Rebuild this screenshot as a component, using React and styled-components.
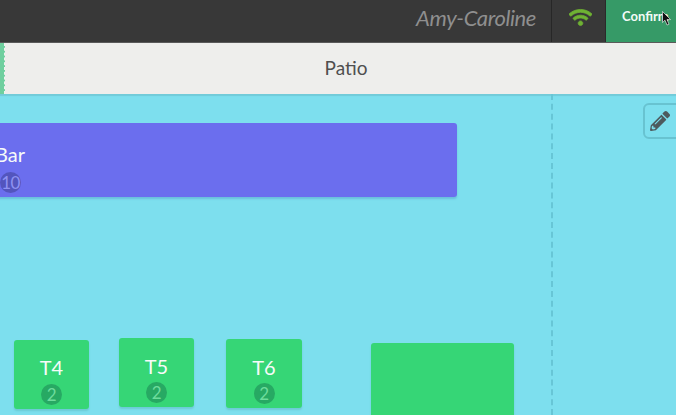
import React from "react";
import styled, { createGlobalStyle } from "styled-components";
import { FaPencilAlt, FaWifi } from "react-icons/fa";

const Global = createGlobalStyle`
  html, body { margin: 0; padding: 0; width: 676px; height: 415px; overflow: hidden; background: #7ddfee; }
  * { box-sizing: border-box; }
  body { font-family: Lato, "Open Sans", sans-serif; }
`;

const Page = styled.div`
  position: relative;
  width: 676px;
  height: 415px;
  overflow: hidden;
  display: flex;
  flex-direction: column;
`;

const TopBar = styled.header`
  flex: none;
  height: 43px;
  display: flex;
  justify-content: flex-end;
  background: #383838;
  border-bottom: 1px solid #5a5a5a;
`;

const UserName = styled.div`
  display: flex;
  align-items: center;
  padding-right: 15px;
  padding-bottom: 8px;
  font-size: 22px;
  font-style: italic;
  letter-spacing: -0.4px;
  color: #8f8f8f;
`;

const StatusCell = styled.div`
  width: 54px;
  display: flex;
  align-items: center;
  justify-content: center;
  padding: 0 0 7px 4px;
  border-left: 1px solid #272727;
  color: #6fb233;
  font-size: 23px;

  svg {
    stroke: currentColor;
    stroke-width: 22px;
  }
`;

const ConfirmButton = styled.button`
  position: relative;
  width: 71px;
  padding: 0 0 10px 16px;
  border: 0;
  border-left: 1px solid #2a2a2a;
  background: #369a67;
  color: #f4fbf7;
  font: 700 13px Lato, sans-serif;
  text-align: left;
  white-space: nowrap;
  overflow: hidden;
`;

const Cursor = styled.svg`
  position: absolute;
  left: 56px;
  top: 11px;
  width: 10px;
  height: 15px;
`;

const TabBar = styled.nav`
  flex: none;
  height: 51px;
  display: flex;
  background: #eeeeec;
`;

const TabMarker = styled.div`
  flex: none;
  width: 5px;
  background: #6fcf9f;
  border-right: 1px dashed #f2f2f0;
`;

const Tab = styled.div`
  flex: 1;
  padding: 0 0 3px 11px;
  display: flex;
  align-items: center;
  justify-content: center;
  font-size: 19px;
  color: #4f4f4f;
`;

const Canvas = styled.main`
  position: relative;
  flex: 1;
  background: #7ddfee;
  box-shadow: inset 0 3px 1px -1px #72cbd9;
`;

const Divider = styled.div`
  position: absolute;
  left: 551px;
  top: 0;
  bottom: 0;
  border-left: 2px dashed #67c6d6;
`;

const EditButton = styled.button`
  position: absolute;
  left: 643px;
  top: 9px;
  width: 50px;
  height: 36px;
  padding: 0 0 0 5px;
  display: flex;
  align-items: center;
  background: transparent;
  border: 2px solid #68c3d1;
  border-radius: 6px;
  color: #4d5a5e;
  font-size: 20px;
`;

const Table = styled.div`
  position: absolute;
  left: ${(p) => p.$x}px;
  top: ${(p) => p.$y}px;
  width: ${(p) => p.$w}px;
  height: ${(p) => p.$h}px;
  padding-top: ${(p) => p.$pad}px;
  display: flex;
  flex-direction: column;
  align-items: center;
  gap: ${(p) => p.$gap}px;
  color: #f6fbf9;
  font-size: 20px;
  line-height: 26px;
  border-radius: 3px;
  background: ${(p) => (p.$bar ? "#6b6eee" : "#36d676")};
  box-shadow: 0 2px 2px ${(p) => (p.$bar ? "#6bbfdc" : "#6ccbd4")};
`;

const BarTable = styled(Table)`
  align-items: flex-start;
`;

const Seats = styled.span`
  width: 21px;
  height: 21px;
  flex: none;
  margin-left: ${(p) => (p.$bar ? "5px" : "0")};
  display: flex;
  align-items: center;
  justify-content: center;
  border-radius: 50%;
  font-size: 17px;
  letter-spacing: -0.5px;
  background: ${(p) => (p.$bar ? "#5355bd" : "#27a963")};
  color: ${(p) => (p.$bar ? "#8f92f2" : "#6ddc9c")};
`;

const tables = [
  { name: "T4", x: 14, y: 246, w: 75, h: 69, pad: 14, gap: 4 },
  { name: "T5", x: 119, y: 244, w: 75, h: 69, pad: 15, gap: 3 },
  { name: "T6", x: 226, y: 245, w: 76, h: 69, pad: 15, gap: 3 },
];

export default function App() {
  return (
    <Page>
      <Global />
      <TopBar>
        <UserName>Amy-Caroline</UserName>
        <StatusCell><FaWifi /></StatusCell>
        <ConfirmButton>
          Confirm
          <Cursor viewBox="0 0 10 15">
            <path d="M0.5 0.5V11.5L3 9.2L5 14L7 13.2L5 8.6H8.6Z" fill="#111" stroke="#fff" strokeWidth="0.6" />
          </Cursor>
        </ConfirmButton>
      </TopBar>
      <TabBar>
        <TabMarker />
        <Tab>Patio</Tab>
      </TabBar>
      <Canvas>
        <Divider />
        <EditButton aria-label="Edit"><FaPencilAlt /></EditButton>
        <BarTable $bar $x={-5} $y={29} $w={462} $h={74} $pad={18} $gap={5}>
          Bar
          <Seats $bar>10</Seats>
        </BarTable>
        {tables.map((t) => (
          <Table key={t.name} $x={t.x} $y={t.y} $w={t.w} $h={t.h} $pad={t.pad} $gap={t.gap}>
            {t.name}
            <Seats>2</Seats>
          </Table>
        ))}
        <Table $x={371} $y={249} $w={143} $h={90} $pad={0} $gap={0} />
      </Canvas>
    </Page>
  );
}
